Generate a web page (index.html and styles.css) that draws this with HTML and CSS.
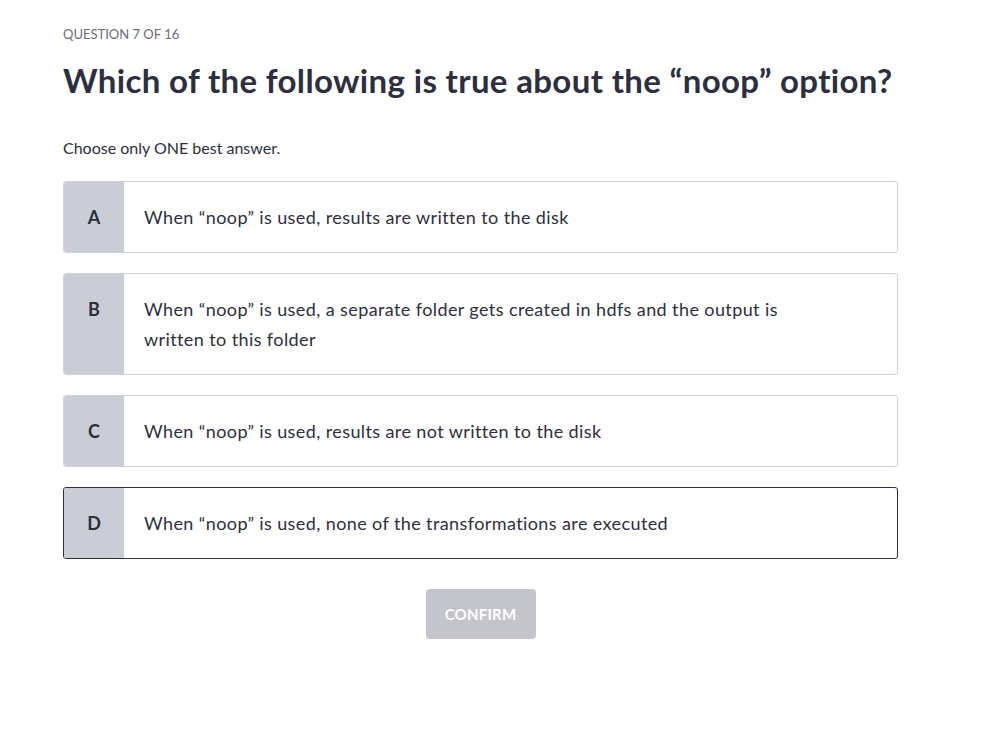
FILE: index.html
```html
<!DOCTYPE html>
<html lang="en">
<head>
<meta charset="utf-8">
<title>Question 7 of 16</title>
<link rel="stylesheet" href="styles.css">
</head>
<body>
<main class="quiz">
  <div class="counter">QUESTION 7 OF 16</div>
  <h1 class="question">Which of the following is true about the “noop” option?</h1>
  <p class="hint">Choose only ONE best answer.</p>
  <ul class="options">
    <li class="option">
      <span class="letter">A</span>
      <span class="text">When “noop” is used, results are written to the disk</span>
    </li>
    <li class="option">
      <span class="letter">B</span>
      <span class="text">When “noop” is used, a separate folder gets created in hdfs and the output is written to this folder</span>
    </li>
    <li class="option">
      <span class="letter">C</span>
      <span class="text">When “noop” is used, results are not written to the disk</span>
    </li>
    <li class="option selected">
      <span class="letter">D</span>
      <span class="text">When “noop” is used, none of the transformations are executed</span>
    </li>
  </ul>
  <div class="actions">
    <button class="confirm" disabled>CONFIRM</button>
  </div>
</main>
</body>
</html>
```

FILE: styles.css
```css
html, body {
  margin: 0;
  padding: 0;
  background: #ffffff;
}

body {
  font-family: Lato, "Liberation Sans", sans-serif;
  color: #2d2f3e;
}

.quiz {
  width: 835px;
  padding: 24px 0 0 63px;
}

.counter {
  font-size: 13px;
  line-height: 20px;
  color: #6a6d78;
}

.question {
  margin: 16px 0 0;
  font-size: 33px;
  line-height: 40px;
  font-weight: 700;
  letter-spacing: 0.35px;
  color: #2d2f3e;
}

.hint {
  margin: 36px 0 0;
  font-size: 16px;
  line-height: 24px;
  color: #2d2f3e;
}

.options {
  list-style: none;
  margin: 21px 0 0;
  padding: 0;
  display: flex;
  flex-direction: column;
  gap: 20px;
}

.option {
  display: flex;
  border: 1px solid #d1d3da;
  border-radius: 3px;
  overflow: hidden;
  background: #ffffff;
}

.option.selected {
  border-color: #2d2f3e;
}

.letter {
  flex: 0 0 60px;
  padding-top: 20px;
  text-align: center;
  background: #cacdd6;
  font-size: 18px;
  line-height: 30px;
  font-weight: 700;
  color: #2d2f3e;
}

.text {
  flex: 1;
  padding: 20px 100px 20px 20px;
  font-size: 18px;
  line-height: 30px;
  letter-spacing: 0.4px;
  color: #2d2f3e;
}

.actions {
  display: flex;
  justify-content: center;
  margin-top: 30px;
}

.confirm {
  width: 110px;
  height: 50px;
  border: none;
  border-radius: 4px;
  background: #c4c5cb;
  color: #ffffff;
  font-family: inherit;
  font-size: 15px;
  font-weight: 700;
  letter-spacing: 0.2px;
}
```
